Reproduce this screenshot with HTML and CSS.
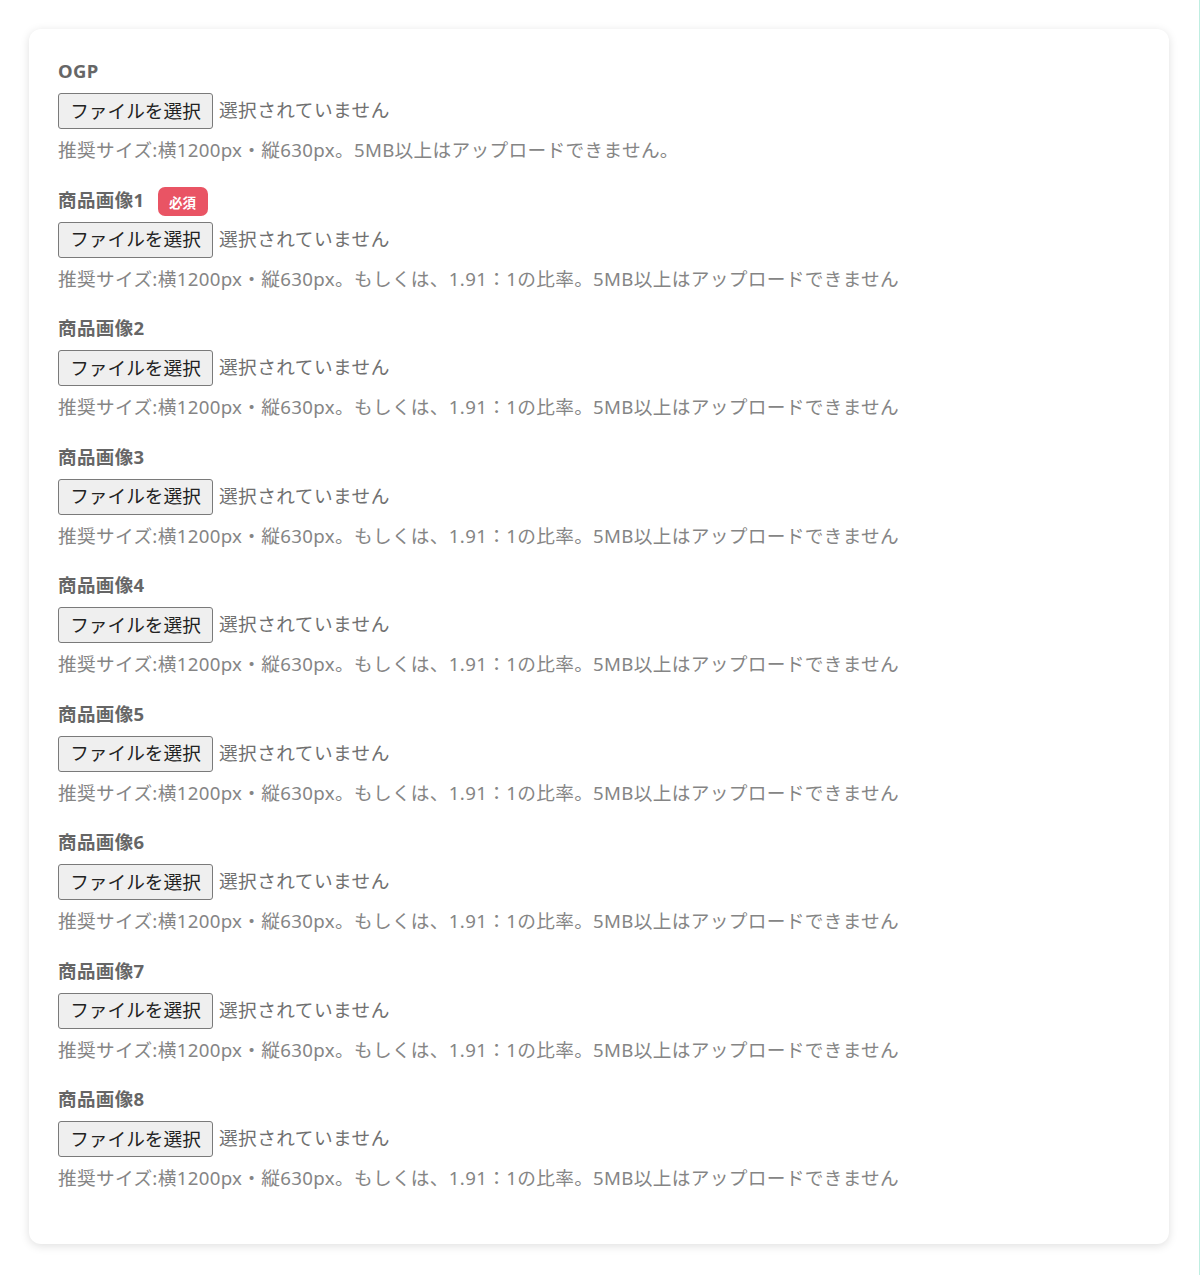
FILE: index.html
```html
<!DOCTYPE html>
<html lang="ja">
<head>
<meta charset="utf-8">
<title>画像アップロード</title>
<link rel="stylesheet" href="styles.css">
</head>
<body>
<div class="card">
  <div class="field">
    <div class="label-row"><span class="label">OGP</span></div>
    <div class="file-row"><button class="file-btn" type="button">ファイルを選択</button><span class="file-status">選択されていません</span></div>
    <p class="hint">推奨サイズ:横1200px・縦630px。5MB以上はアップロードできません。</p>
  </div>
  <div class="field">
    <div class="label-row"><span class="label">商品画像1</span><span class="badge">必須</span></div>
    <div class="file-row"><button class="file-btn" type="button">ファイルを選択</button><span class="file-status">選択されていません</span></div>
    <p class="hint">推奨サイズ:横1200px・縦630px。もしくは、1.91：1の比率。5MB以上はアップロードできません</p>
  </div>
  <div class="field">
    <div class="label-row"><span class="label">商品画像2</span></div>
    <div class="file-row"><button class="file-btn" type="button">ファイルを選択</button><span class="file-status">選択されていません</span></div>
    <p class="hint">推奨サイズ:横1200px・縦630px。もしくは、1.91：1の比率。5MB以上はアップロードできません</p>
  </div>
  <div class="field">
    <div class="label-row"><span class="label">商品画像3</span></div>
    <div class="file-row"><button class="file-btn" type="button">ファイルを選択</button><span class="file-status">選択されていません</span></div>
    <p class="hint">推奨サイズ:横1200px・縦630px。もしくは、1.91：1の比率。5MB以上はアップロードできません</p>
  </div>
  <div class="field">
    <div class="label-row"><span class="label">商品画像4</span></div>
    <div class="file-row"><button class="file-btn" type="button">ファイルを選択</button><span class="file-status">選択されていません</span></div>
    <p class="hint">推奨サイズ:横1200px・縦630px。もしくは、1.91：1の比率。5MB以上はアップロードできません</p>
  </div>
  <div class="field">
    <div class="label-row"><span class="label">商品画像5</span></div>
    <div class="file-row"><button class="file-btn" type="button">ファイルを選択</button><span class="file-status">選択されていません</span></div>
    <p class="hint">推奨サイズ:横1200px・縦630px。もしくは、1.91：1の比率。5MB以上はアップロードできません</p>
  </div>
  <div class="field">
    <div class="label-row"><span class="label">商品画像6</span></div>
    <div class="file-row"><button class="file-btn" type="button">ファイルを選択</button><span class="file-status">選択されていません</span></div>
    <p class="hint">推奨サイズ:横1200px・縦630px。もしくは、1.91：1の比率。5MB以上はアップロードできません</p>
  </div>
  <div class="field">
    <div class="label-row"><span class="label">商品画像7</span></div>
    <div class="file-row"><button class="file-btn" type="button">ファイルを選択</button><span class="file-status">選択されていません</span></div>
    <p class="hint">推奨サイズ:横1200px・縦630px。もしくは、1.91：1の比率。5MB以上はアップロードできません</p>
  </div>
  <div class="field">
    <div class="label-row"><span class="label">商品画像8</span></div>
    <div class="file-row"><button class="file-btn" type="button">ファイルを選択</button><span class="file-status">選択されていません</span></div>
    <p class="hint">推奨サイズ:横1200px・縦630px。もしくは、1.91：1の比率。5MB以上はアップロードできません</p>
  </div>
</div>
</body>
</html>
```

FILE: styles.css
```css
html {
  background: #ffffff;
  border-right: 1px solid #bfeee1;
  min-height: 100%;
}

body {
  margin: 0;
  padding: 29px 30px 30px 29px;
  font-family: "Noto Sans", "Noto Sans CJK JP", sans-serif;
  color: #555;
}

.card {
  width: 1140px;
  box-sizing: border-box;
  background: #ffffff;
  border-radius: 12px;
  box-shadow: 0 2px 10px rgba(0, 0, 0, 0.13);
  padding: 28px 29px 30px 29px;
}

.field {
  margin-bottom: 22.5px;
}

.label-row {
  display: flex;
  align-items: center;
  gap: 13px;
  height: 28px;
  margin-bottom: 8px;
}

.label {
  font-size: 18.5px;
  font-weight: 700;
  color: #666;
  line-height: 28px;
  letter-spacing: 0.4px;
}

.badge {
  display: inline-flex;
  align-items: center;
  justify-content: center;
  width: 50px;
  height: 29px;
  border-radius: 7px;
  background: #e95464;
  color: #ffffff;
  font-size: 13.5px;
  font-weight: 700;
  margin-top: 4px;
}

.file-row {
  display: flex;
  align-items: center;
  height: 36px;
}

.file-btn {
  box-sizing: border-box;
  width: 155px;
  height: 36px;
  padding: 0 0 2px 0;
  border: 1px solid #7a7a7a;
  border-radius: 3px;
  background: #efefef;
  color: #222;
  font-family: "Noto Sans CJK JP", sans-serif;
  font-size: 18.67px;
  line-height: 1;
}

.file-status {
  margin-left: 6px;
  margin-bottom: 3px;
  font-family: "Noto Sans CJK JP", sans-serif;
  font-size: 18.67px;
  line-height: 1;
  letter-spacing: 0.45px;
  color: #707070;
}

.hint {
  margin: 8px 0 0 0;
  font-size: 18.67px;
  line-height: 26px;
  letter-spacing: 0.33px;
  color: #858585;
}
```
